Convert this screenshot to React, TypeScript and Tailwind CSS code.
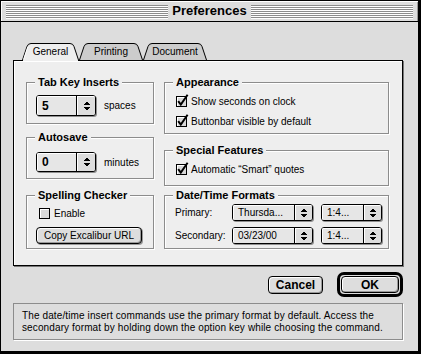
import React from "react";

function Stripes() {
  return (
    <div className="flex-1 flex flex-col gap-[1px]">
      {[0, 1, 2, 3, 4, 5, 6].map((i) => (
        <div key={i} className="h-[1px] bg-[#8c8c8c] shadow-[0_1px_0_#ffffff]" />
      ))}
    </div>
  );
}

function Arrows() {
  return (
    <svg width="7" height="10" viewBox="0 0 7 10" shapeRendering="crispEdges">
      <path d="M0 4 L3.5 0.5 L7 4 Z M0 6 L7 6 L3.5 9.5 Z" fill="black" />
    </svg>
  );
}

function Popup({
  cls,
  aw,
  label,
  bold,
}: {
  cls: string;
  aw: string;
  label: string;
  bold?: boolean;
}) {
  return (
    <div
      className={`flex shrink-0 border border-black rounded-[3px] bg-[#dddddd] shadow-[1px_1px_0_#8f8f8f] overflow-hidden ${cls}`}
    >
      <div
        className={`flex-1 flex items-center pl-[5px] bg-[#e6e6e6] shadow-[inset_1px_1px_0_#ffffff] ${
          bold ? "font-bold text-[12px]" : "text-[10px]"
        }`}
      >
        {label}
      </div>
      <div
        className={`${aw} border-l border-black flex items-center justify-center bg-[#dddddd] shadow-[inset_1px_1px_0_#ffffff]`}
      >
        <Arrows />
      </div>
    </div>
  );
}

function Check({ checked, label }: { checked: boolean; label: string }) {
  return (
    <div className="flex items-center gap-[4px] h-[11px]">
      <svg
        width="11"
        height="11"
        viewBox="0 0 11 11"
        className="overflow-visible shrink-0"
      >
        <rect x="0.5" y="0.5" width="10" height="10" fill="#d8d8d8" stroke="black" />
        <path d="M1 1.5 H10 M1.5 1 V10" stroke="#ffffff" />
        {checked && (
          <path
            d="M2.2 5.2 L4.8 8.6 L11.6 -1.2"
            stroke="black"
            strokeWidth="2"
            fill="none"
          />
        )}
      </svg>
      <span className="text-[10px] leading-[11px]">{label}</span>
    </div>
  );
}

function Group({
  title,
  cls,
  children,
}: {
  title: string;
  cls: string;
  children?: React.ReactNode;
}) {
  return (
    <div
      className={`relative border border-[#8c8c8c] shadow-[1px_1px_0_#ffffff,inset_1px_1px_0_#ffffff] ${cls}`}
    >
      <span className="absolute left-[8px] -top-[8px] px-[3px] bg-[#eeeeee] text-[11px] font-bold leading-[14px] whitespace-nowrap">
        {title}
      </span>
      {children}
    </div>
  );
}

function Tab({
  w,
  label,
  selected,
}: {
  w: number;
  label: string;
  selected?: boolean;
}) {
  const b = selected ? 18 : 17;
  const d = `M0.5 ${b} L0.5 17 L5 3.5 Q6 0.5 9 0.5 L${w - 9} 0.5 Q${w - 6} 0.5 ${w - 5} 3.5 L${w - 0.5} 17 L${w - 0.5} ${b}`;
  return (
    <div className="relative h-[18px] flex justify-center" style={{ width: w }}>
      <svg
        width={w}
        height="18"
        viewBox={`0 0 ${w} 18`}
        className="absolute left-0 top-0"
      >
        <path d={d + " Z"} fill={selected ? "#eeeeee" : "#cccccc"} />
        <path d={d} fill="none" stroke="black" />
        {selected && <path d="M1.6 16.5 L5.8 4" stroke="#ffffff" fill="none" />}
      </svg>
      <span className="relative text-[10px] leading-[12px] pt-[3px]">{label}</span>
    </div>
  );
}

export default function App() {
  return (
    <div className="w-[421px] h-[354px] flex flex-col bg-[#dddddd] border-l border-t border-r-[3px] border-b-[3px] border-black font-['Liberation_Sans',Arial,sans-serif] text-black overflow-hidden">
      {/* title bar */}
      <div className="h-[21px] shrink-0 border-b border-black flex items-center px-[5px] gap-[4px] bg-[#dddddd] shadow-[inset_1px_1px_0_#ffffff,inset_-1px_0_0_#999999]">
        <Stripes />
        <div className="text-[13px] font-bold leading-[16px]">Preferences</div>
        <Stripes />
      </div>

      {/* body */}
      <div className="flex flex-col pl-[12px] pt-[21px]">
        {/* tabs */}
        <div className="flex ml-[9px] h-[18px] relative z-10">
          <Tab w={57} label="General" selected />
          <Tab w={64} label="Printing" />
          <Tab w={64} label="Document" />
        </div>

        {/* panel */}
        <div className="-mt-[1px] w-[390px] h-[206px] border border-black bg-[#eeeeee] shadow-[inset_1px_1px_0_#ffffff,1px_1px_0_#777777] flex gap-[10px] pl-[12px] pt-[21px]">
          {/* left column */}
          <div className="w-[128px] flex flex-col">
            <Group title="Tab Key Inserts" cls="h-[42px] pt-[12px] pl-[9px]">
              <div className="flex items-center gap-[8px]">
                <Popup cls="w-[60px] h-[21px]" aw="w-[19px]" label="5" bold />
                <span className="text-[10px]">spaces</span>
              </div>
            </Group>
            <Group title="Autosave" cls="mt-[13px] h-[42px] pt-[14px] pl-[9px]">
              <div className="flex items-center gap-[8px]">
                <Popup cls="w-[60px] h-[20px]" aw="w-[19px]" label="0" bold />
                <span className="text-[10px]">minutes</span>
              </div>
            </Group>
            <Group title="Spelling Checker" cls="mt-[16px] h-[54px] pt-[12px] pl-[9px] flex flex-col">
              <div className="pl-[3px]">
                <Check checked={false} label="Enable" />
              </div>
              <button className="mt-[8px] w-[106px] h-[17px] rounded-[4px] border border-black bg-[#dddddd] shadow-[inset_1px_1px_0_#ffffff,inset_-1px_-1px_0_#999999,1px_1px_0_#999999] text-[10px] leading-[14px] flex items-center justify-center">
                Copy Excalibur URL
              </button>
            </Group>
          </div>

          {/* right column */}
          <div className="w-[225px] flex flex-col">
            <Group title="Appearance" cls="h-[52px] pt-[13px] pl-[11px] flex flex-col gap-[9px]">
              <Check checked label="Show seconds on clock" />
              <Check checked label="Buttonbar visible by default" />
            </Group>
            <Group title="Special Features" cls="mt-[16px] h-[36px] pt-[13px] pl-[11px]">
              <Check checked label={"Automatic \u201CSmart\u201D quotes"} />
            </Group>
            <Group title="Date/Time Formats" cls="mt-[9px] h-[54px] pt-[8px] pl-[10px] flex flex-col gap-[6px]">
              <div className="flex items-center">
                <span className="w-[57px] text-[10px]">Primary:</span>
                <Popup cls="w-[81px] h-[17px]" aw="w-[18px]" label="Thursda..." />
                <div className="w-[8px]" />
                <Popup cls="w-[61px] h-[17px]" aw="w-[18px]" label="1:4..." />
              </div>
              <div className="flex items-center">
                <span className="w-[57px] text-[10px]">Secondary:</span>
                <Popup cls="w-[81px] h-[17px]" aw="w-[18px]" label="03/23/00" />
                <div className="w-[8px]" />
                <Popup cls="w-[61px] h-[17px]" aw="w-[18px]" label="1:4..." />
              </div>
            </Group>
          </div>
        </div>

        {/* buttons */}
        <div className="w-[390px] mt-[6px] flex items-center justify-end gap-[14px]">
          <button className="w-[55px] h-[18px] rounded-[4px] border border-black bg-[#dddddd] shadow-[inset_1px_1px_0_#ffffff,inset_-1px_-1px_0_#999999] text-[12px] font-bold leading-[14px] flex items-center justify-center">
            Cancel
          </button>
          <div className="w-[66px] h-[25px] rounded-[7px] border-[3px] border-black p-[1px] bg-[#dddddd]">
            <button className="w-full h-full rounded-[4px] border border-black bg-[#dddddd] shadow-[inset_1px_1px_0_#ffffff,inset_-1px_-1px_0_#999999] text-[12px] font-bold leading-[14px] flex items-center justify-center">
              OK
            </button>
          </div>
        </div>

        {/* info */}
        <div className="mt-[6px] w-[390px] h-[37px] border border-[#8c8c8c] shadow-[1px_1px_0_#ffffff] pl-[8px] pt-[6px] text-[10px] leading-[12px] tracking-[0.12px] whitespace-nowrap">
          <div>The date/time insert commands use the primary format by default. Access the</div>
          <div>secondary format by holding down the option key while choosing the command.</div>
        </div>
      </div>
    </div>
  );
}
